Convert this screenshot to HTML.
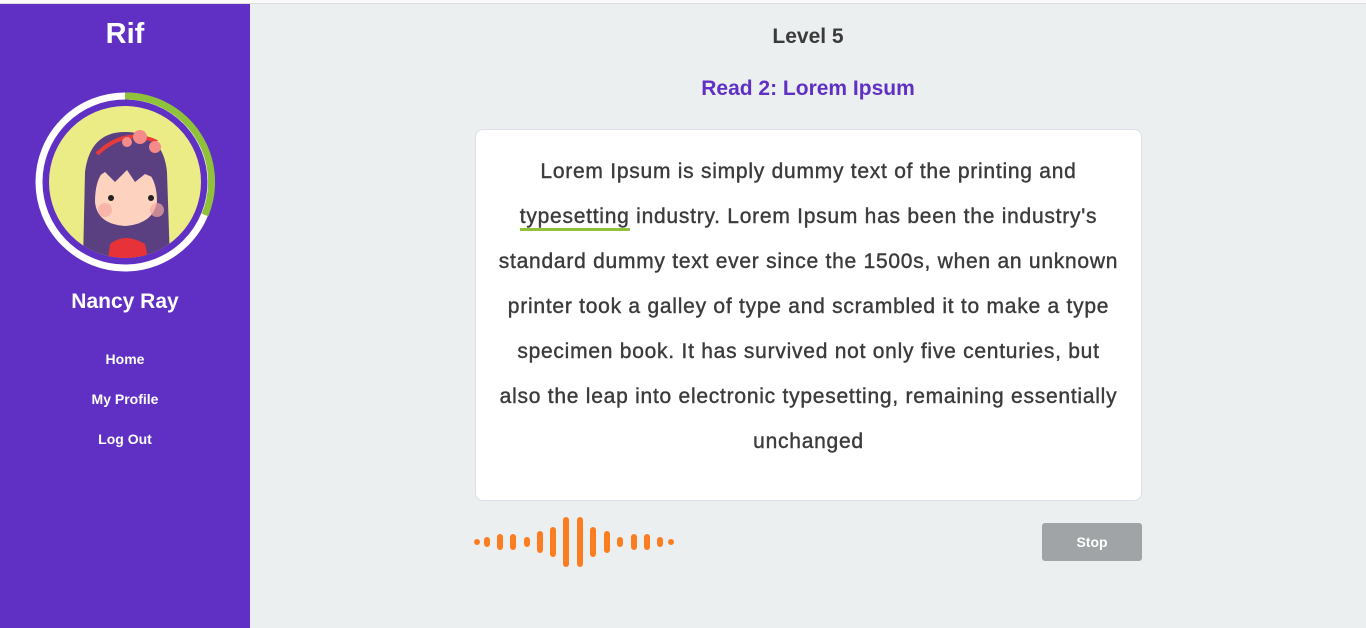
<!DOCTYPE html>
<html><head><style>
*{margin:0;padding:0;box-sizing:border-box}
body{width:1366px;height:628px;overflow:hidden;background:#eceff0;font-family:"Liberation Sans",sans-serif;position:relative}
.top{position:absolute;left:0;top:0;width:1366px;height:4px;background:#fafafa;border-bottom:1px solid #ddd}
.side{position:absolute;left:0;top:4px;width:250px;height:624px;background:#5f30c3;color:#fff;text-align:center}
.brand{position:absolute;top:14px;width:250px;font-size:29px;font-weight:bold}
.name{position:absolute;top:286px;width:250px;font-size:21px;font-weight:bold}
.nav{position:absolute;width:250px;font-size:14px;font-weight:bold}
.t{position:absolute;width:1116px;left:250px;text-align:center;font-weight:bold}
.card{position:absolute;left:475px;top:129px;width:667px;height:372px;background:#fff;border:1px solid #dde;border-radius:8px}
.txt{position:absolute;left:0;top:148px;width:667px;text-align:center;font-size:21px;line-height:45px;color:#3b3b3b;white-space:nowrap;letter-spacing:0.75px;-webkit-text-stroke:0.4px #3b3b3b}
.u{border-bottom:3px solid #8fc13a;line-height:1}
.stop{position:absolute;left:1042px;top:523px;width:100px;height:38px;background:#a0a4a6;border-radius:3px;color:#fff;font-weight:bold;font-size:14px;text-align:center;line-height:38px}
.bar{position:absolute;width:6px;background:#fb7d22;border-radius:3px}
</style></head><body>
<div class="top"></div>
<div class="side">
<div class="brand">Rif</div>
<svg style="position:absolute;left:35px;top:88px" width="180" height="180" viewBox="0 0 180 180">
<circle cx="90" cy="90" r="86" fill="none" stroke="#fff" stroke-width="7"/>
<path d="M90 4 A86 86 0 0 1 170 123" fill="none" stroke="#8fc13a" stroke-width="7"/>
<circle cx="90" cy="90" r="76" fill="#ecec86"/>
<clipPath id="c"><circle cx="90" cy="90" r="76"/></clipPath>
<g clip-path="url(#c)">
<path d="M48 170 L50 80 Q55 40 90 40 Q128 40 132 80 L135 170 Z" fill="#5a4080"/>
<path d="M60 110 Q60 70 90 72 Q122 72 122 110 Q118 132 90 134 Q62 132 60 110Z" fill="#fdd3c0"/>
<path d="M58 88 Q60 50 90 50 Q122 50 124 88 L110 82 L100 90 L92 78 L80 90 L70 80Z" fill="#5a4080"/>
<circle cx="76" cy="106" r="3" fill="#222"/><circle cx="116" cy="106" r="3" fill="#222"/>
<circle cx="70" cy="118" r="7" fill="#f7a8a0" opacity=".7"/><circle cx="122" cy="118" r="7" fill="#f7a8a0" opacity=".7"/>
<path d="M75 152 Q90 140 110 152 L115 175 L72 175Z" fill="#e8323a"/>
<path d="M62 62 Q90 35 122 50" fill="none" stroke="#e83a3a" stroke-width="4"/>
<circle cx="105" cy="45" r="7" fill="#f58a8a"/><circle cx="120" cy="55" r="6" fill="#f58a8a"/><circle cx="92" cy="50" r="5" fill="#f58a8a"/>
</g></svg>
<div class="name">Nancy Ray</div>
<div class="nav" style="top:347px">Home</div>
<div class="nav" style="top:387px">My Profile</div>
<div class="nav" style="top:427px">Log Out</div>
</div>
<div class="t" style="top:25px;font-size:21px;color:#3b3b3b">Level 5</div>
<div class="t" style="top:77px;font-size:21px;color:#5f30c3">Read 2: Lorem Ipsum</div>
<div class="card"></div>
<div class="txt" style="left:475px;top:149px">Lorem Ipsum is simply dummy text of the printing and<br><span class="u">typesetting</span> industry. Lorem Ipsum has been the industry's<br>standard dummy text ever since the 1500s, when an unknown<br>printer took a galley of type and scrambled it to make a type<br>specimen book. It has survived not only five centuries, but<br>also the leap into electronic typesetting, remaining essentially<br>unchanged</div>
<div class="bar" style="left:474px;top:539px;height:6px"></div>
<div class="bar" style="left:484px;top:537px;height:10px"></div>
<div class="bar" style="left:497px;top:534px;height:16px"></div>
<div class="bar" style="left:510px;top:534px;height:16px"></div>
<div class="bar" style="left:524px;top:537px;height:10px"></div>
<div class="bar" style="left:537px;top:531px;height:22px"></div>
<div class="bar" style="left:550px;top:527px;height:30px"></div>
<div class="bar" style="left:563px;top:517px;height:50px"></div>
<div class="bar" style="left:577px;top:517px;height:50px"></div>
<div class="bar" style="left:590px;top:527px;height:30px"></div>
<div class="bar" style="left:604px;top:531px;height:22px"></div>
<div class="bar" style="left:617px;top:537px;height:10px"></div>
<div class="bar" style="left:631px;top:534px;height:16px"></div>
<div class="bar" style="left:644px;top:534px;height:16px"></div>
<div class="bar" style="left:657px;top:537px;height:10px"></div>
<div class="bar" style="left:668px;top:539px;height:6px"></div>
<div class="stop">Stop</div>
</body></html>
